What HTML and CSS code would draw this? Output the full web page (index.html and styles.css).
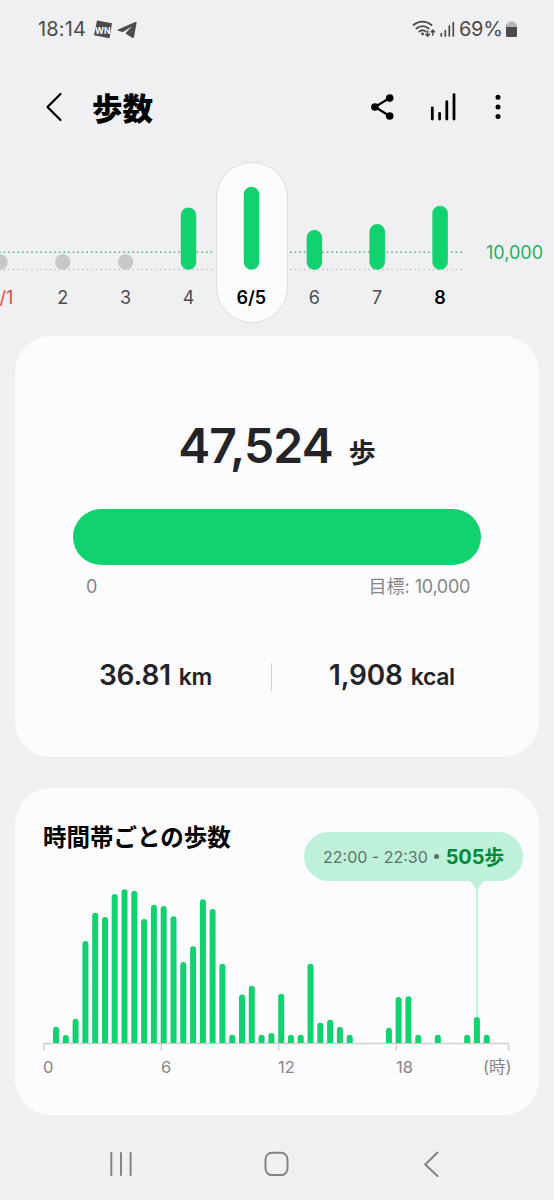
FILE: index.html
```html
<!DOCTYPE html>
<html lang="ja">
<head>
<meta charset="utf-8">
<title>歩数</title>
<link rel="stylesheet" href="styles.css">
</head>
<body>
<div class="status">
  <span class="clock">18:14</span>
  <svg class="notif" width="45" height="20" viewBox="0 0 45 20">
    <path class="fill" d="M4 1.500 19 4.300 16.500 19.300 1 16.300z"/>
    <text class="wn" x="2" y="14.500" textLength="15.500" lengthAdjust="spacingAndGlyphs">WN</text>
    <path class="fill" d="M25 10.600 42.200 3.100q1.600-.6 1.400 1L41 18q-.4 1.600-1.900.7L33.200 15q-.8-.7 0-1.500L39 7.300l-8.200 5.200q-1 .6-2 .3L25 11.700q-1.200-.6 0-1.100z"/>
  </svg>
  <span class="spacer"></span>
  <svg class="radio" width="46" height="20" viewBox="0 0 46 20">
    <g class="line">
      <path d="M1.500 6a13.800 13.800 0 0 1 18 0M4.400 9.500a9.400 9.400 0 0 1 12.300 0M7.300 12.600a5 5 0 0 1 6.500 0"/>
      <path class="thin" d="M15.600 12v5M13.800 15.300l1.800 2 1.800-2M20.800 16.300v-5M19 13l1.800-2 1.800 2"/>
      <path class="signal" d="M29.300 17v-2.500M33.300 17v-5.500M37.300 17V7M41.300 17V3.500"/>
    </g>
    <circle class="fill" cx="10.600" cy="15" r="1.400"/>
  </svg>
  <span class="percent">69%</span>
  <svg class="battery" width="13" height="18" viewBox="0 0 13 18">
    <path class="faint" d="M1 7V5q0-1.700 1.700-1.700H3.500V2.600q0-1 1-1h4q1 0 1 1v.7h.8Q12 3.300 12 5v2z"/>
    <path class="fill" d="M1 7h11v8.500q0 1.500-1.500 1.500h-8Q1 17 1 15.500z"/>
  </svg>
</div>

<header class="appbar">
  <svg width="20" height="32" viewBox="0 0 20 32"><path class="back" d="M16.500 3 3.500 16l13 13"/></svg>
  <h1>歩数</h1>
  <svg class="share" width="26" height="28" viewBox="0 0 26 28">
    <path d="M19.500 5 5 14l14.500 9" fill="none" stroke="#000" stroke-width="2.200"/>
    <circle cx="19.700" cy="5.100" r="3.800"/><circle cx="4.900" cy="14" r="3.800"/><circle cx="19.700" cy="23" r="3.800"/>
  </svg>
  <svg class="stats" width="28" height="30" viewBox="0 0 28 30"><path d="M3.300 27v-11M10.600 27v-5.700M17.800 27V9.700M25 27V2.600"/></svg>
  <svg class="more" width="6" height="26" viewBox="0 0 6 26"><circle cx="3" cy="3.300" r="2.500"/><circle cx="3" cy="13" r="2.500"/><circle cx="3" cy="22.600" r="2.500"/></svg>
</header>

<section class="week">
  <div class="pill"></div>
  <svg class="weekplot" width="554" height="110" viewBox="0 165 554 110">
    <path class="goal" d="M-1 252.300H214M290 252.300H463"/>
    <path class="zero" d="M-1 269.500H214M290 269.500H463"/>
    <g class="dot"><circle cx="0" cy="262" r="7.700"/><circle cx="62.700" cy="262" r="7.700"/><circle cx="125.600" cy="262" r="7.700"/></g>
    <path class="daybar" d="M188.500 262V215.300M251.500 262V194.500M314.400 262V237.800M377.200 262V231.700M440.100 262V213.600"/>
  </svg>
  <div class="days">
    <span class="holiday">6/1</span><span>2</span><span>3</span><span>4</span><span class="on">6/5</span><span>6</span><span>7</span><span class="on">8</span>
  </div>
  <span class="goaltext">10,000</span>
</section>

<section class="card total">
  <div class="count"><b>47,524</b><span>歩</span></div>
  <div class="progress"></div>
  <div class="range"><span>0</span><span class="target">目標: <i>10,000</i></span></div>
  <div class="facts">
    <p class="km"><b>36.81</b><span>km</span></p>
    <p class="kcal"><b>1,908</b><span>kcal</span></p>
  </div>
</section>

<section class="card hourly">
  <h2>時間帯ごとの歩数</h2>
  <div class="tip"><span class="time">22:00 - 22:30</span><span class="bullet"></span><b>505</b><em>歩</em></div>
  <svg class="plot" width="480" height="170" viewBox="40 881 480 170">
    <path class="pointer" d="M469.800 881h14l-7 8.500z"/>
    <path class="guide" d="M476.800 886V1020"/>
    <path class="axis" d="M44 1050.500V1043.500H508.500V1050.500M161.300 1043V1050.500M278.700 1043V1050.500M396.300 1043V1050.500"/>
    <svg x="40" y="881" width="480" height="162" viewBox="40 881 480 162">
      <path class="bars" d="M56 1050V1029.700M65.800 1050V1038M75.600 1050V1021.700M85.400 1050V944M95.200 1050V915.700M105 1050V920M114.700 1050V897M124.500 1050V892.200M134.300 1050V893.700M144.100 1050V922M153.900 1050V907.700M163.700 1050V909M173.500 1050V919.300M183.300 1050V965M193.100 1050V949.300M202.900 1050V902.300M212.600 1050V912M222.400 1050V966.800M232.200 1050V1037.800M242 1050V997.500M251.800 1050V988.700M261.600 1050V1037.800M271.400 1050V1036M281.200 1050V996.800M290.900 1050V1037.800M300.700 1050V1037.800M310.500 1050V966.800M320.300 1050V1025.700M330.100 1050V1022.700M339.900 1050V1030M349.700 1050V1037.800M388.900 1050V1030.800M398.600 1050V1000M408.400 1050V999.300M418.200 1050V1037.800M437.800 1050V1037.800M467.200 1050V1037.800M476.900 1050V1020M486.700 1050V1037.800"/>
    </svg>
  </svg>
  <div class="hours"><span>0</span><span>6</span><span>12</span><span>18</span><span class="unit">(時)</span></div>
</section>

<nav class="nav">
  <svg width="26" height="28" viewBox="0 0 26 28"><path d="M3.300 3v22M13 3v22M22.600 3v22"/></svg>
  <svg width="26" height="28" viewBox="0 0 26 28"><rect x="1.500" y="2.700" width="22" height="22.400" rx="6.500"/></svg>
  <svg width="26" height="28" viewBox="0 0 26 28"><path d="M18.500 2.500 6.200 14.500 18.500 26"/></svg>
</nav>
</body>
</html>
```

FILE: styles.css
```css
* { box-sizing: border-box; margin: 0; padding: 0; }
body {
  width: 554px; height: 1200px; overflow: hidden;
  display: flex; flex-direction: column;
  background: #f0f0f2; color: #242428;
  font-family: Inter, "Noto Sans CJK JP", sans-serif;
}
svg { display: block; flex: none; }
span, b, i, em { white-space: nowrap; }
i, em { font-style: normal; }

.status { display: flex; align-items: center; height: 58px; padding: 0 36px 0 38px; color: #4b4b4e; font-size: 20px; }
.clock { width: 48px; letter-spacing: 0.15px; }
.notif { margin-left: 7px; }
.fill { fill: #4b4b4e; }
.faint { fill: #b5b5b8; }
.wn { fill: #fff; font-size: 9px; font-weight: 700; }
.spacer { flex: 1; }
.line { fill: none; stroke: #4b4b4e; stroke-width: 1.8; stroke-linecap: round; }
.thin { stroke-width: 1.4; }
.signal { stroke-width: 1.7; }
.percent { width: 46px; margin-left: 1px; letter-spacing: -0.3px; }

.appbar { display: flex; align-items: center; height: 98px; padding: 0 53px 0 44px; }
.back { fill: none; stroke: #000; stroke-width: 2.2; stroke-linecap: round; stroke-linejoin: round; }
.appbar h1 { flex: 1; margin-left: 28px; color: #000; font: 900 30.500px/40px "Noto Sans CJK JP", sans-serif; }
.stats { margin-left: 33px; }
.stats path { fill: none; stroke: #000; stroke-width: 2.8; stroke-linecap: round; }
.more { margin-left: 38px; }

.week { position: relative; height: 180px; padding-top: 9px; }
.pill { position: absolute; left: 215.500px; top: 6px; width: 72px; height: 161px; border: 1px solid #dedee1; border-radius: 36px; background: #fcfcff; }
.weekplot { position: relative; }
.goal, .zero { fill: none; stroke-width: 1.5; stroke-dasharray: 1.6 3; }
.goal { stroke: #4dba7c; }
.zero { stroke: #c4c4c6; }
.dot { fill: #c8c8ca; }
.daybar { fill: none; stroke: #12d26f; stroke-width: 15.500; stroke-linecap: round; }
.days { position: relative; display: grid; grid-template-columns: repeat(8, 62.860px); margin-left: -31.500px; padding-top: 11px; text-align: center; color: #4e4e51; font-size: 18px; line-height: 24px; }
.days .on { color: #000; font-weight: 600; }
.days .holiday { padding-left: 2px; color: #dc4648; }
.goaltext { position: absolute; left: 486px; top: 85px; color: #1fb263; font-size: 18px; line-height: 24px; }

.card { width: 524px; margin-left: 15px; border-radius: 36px; background: #fcfcff; }
.total { height: 421px; padding: 80px 58px 0; }
.count { display: flex; align-items: baseline; justify-content: center; height: 93px; line-height: 60px; }
.count b { font-size: 48px; font-weight: 600; letter-spacing: -0.9px; }
.count span { margin-left: 16px; font-size: 27px; font-weight: 700; }
.progress { height: 56px; border-radius: 28px; background: #12d26f; }
.range { display: flex; justify-content: space-between; padding: 10px 11px 0 13px; color: #858588; font-size: 18px; line-height: 24px; }
.range i { letter-spacing: -0.3px; }
.facts { display: grid; grid-template-columns: 199px 1fr; margin-top: 64px; line-height: 24px; }
.facts p { white-space: nowrap; }
.facts b { font-size: 28px; font-weight: 600; letter-spacing: -0.2px; }
.facts span { margin-left: 8px; font-size: 23px; font-weight: 600; letter-spacing: -0.4px; }
.km { padding-left: 26px; border-right: 1px solid #d2d2d5; }
.kcal { padding-left: 57px; }

.hourly { position: relative; height: 327px; margin-top: 31px; padding: 28px 0 0 25px; }
.hourly h2 { height: 65px; padding-left: 3px; color: #000; font: 700 23.500px/40px "Noto Sans CJK JP", sans-serif; }
.tip { position: absolute; left: 289px; top: 44px; display: flex; align-items: center; width: 219px; height: 49px; padding-left: 19px; border-radius: 25px; background: #bff1da; color: #5e716a; font-size: 16px; }
.bullet { width: 5px; height: 5px; margin: 0 7px 0 6px; border-radius: 50%; background: #5e716a; }
.tip b { color: #04893a; font-size: 20px; font-weight: 700; letter-spacing: -0.2px; }
.tip em { color: #04893a; font-size: 20px; font-weight: 700; }
.pointer { fill: #bff1da; }
.guide { stroke: #bff1da; stroke-width: 1.6; }
.axis { fill: none; stroke: #d0d0d3; stroke-width: 1.3; }
.bars { fill: none; stroke: #12d26f; stroke-width: 6; stroke-linecap: round; }
.hours { display: grid; grid-template-columns: 118px 117px 118px 87px 30px; margin-top: 4px; padding-left: 3px; color: #858588; font-size: 16.500px; line-height: 24px; }

.nav { display: flex; align-items: center; justify-content: space-between; flex: 1; margin-top: 14px; padding: 0 109px 1px 108px; }
.nav path, .nav rect { fill: none; stroke: #838386; stroke-width: 2; stroke-linecap: round; stroke-linejoin: round; }
```
